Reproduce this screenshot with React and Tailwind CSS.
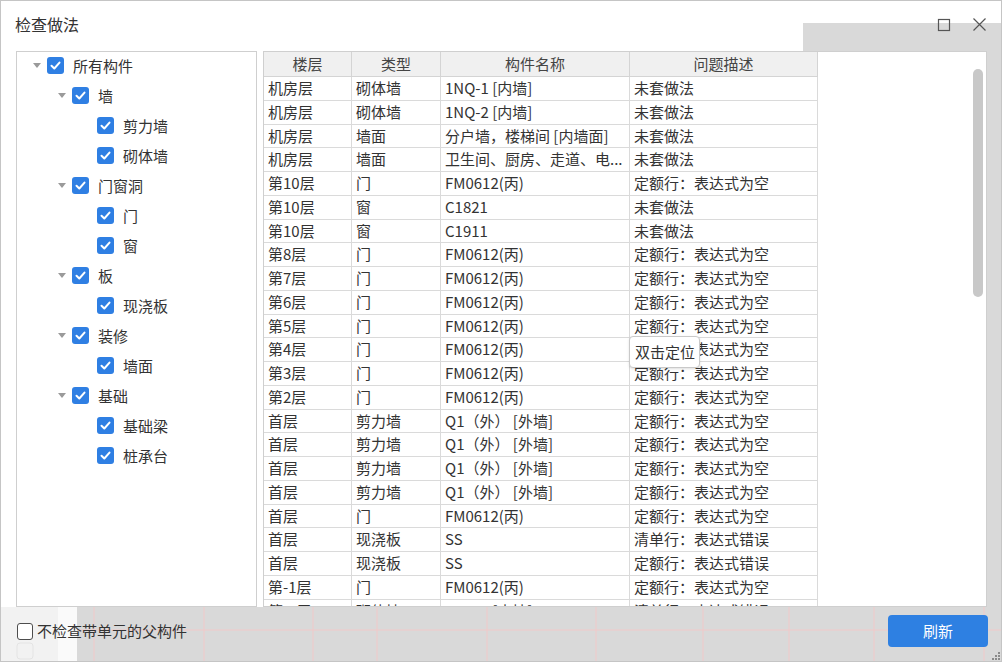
import React from 'react';

const tree = [
  { level: 0, label: '所有构件', arrow: true },
  { level: 1, label: '墙', arrow: true },
  { level: 2, label: '剪力墙' },
  { level: 2, label: '砌体墙' },
  { level: 1, label: '门窗洞', arrow: true },
  { level: 2, label: '门' },
  { level: 2, label: '窗' },
  { level: 1, label: '板', arrow: true },
  { level: 2, label: '现浇板' },
  { level: 1, label: '装修', arrow: true },
  { level: 2, label: '墙面' },
  { level: 1, label: '基础', arrow: true },
  { level: 2, label: '基础梁' },
  { level: 2, label: '桩承台' },
];

const empty = '定额行：表达式为空';
const rows = [
  ['机房层', '砌体墙', '1NQ-1 [内墙]', '未套做法'],
  ['机房层', '砌体墙', '1NQ-2 [内墙]', '未套做法'],
  ['机房层', '墙面', '分户墙，楼梯间 [内墙面]', '未套做法'],
  ['机房层', '墙面', '卫生间、厨房、走道、电...', '未套做法'],
  ['第10层', '门', 'FM0612(丙)', empty],
  ['第10层', '窗', 'C1821', '未套做法'],
  ['第10层', '窗', 'C1911', '未套做法'],
  ['第8层', '门', 'FM0612(丙)', empty],
  ['第7层', '门', 'FM0612(丙)', empty],
  ['第6层', '门', 'FM0612(丙)', empty],
  ['第5层', '门', 'FM0612(丙)', empty],
  ['第4层', '门', 'FM0612(丙)', empty],
  ['第3层', '门', 'FM0612(丙)', empty],
  ['第2层', '门', 'FM0612(丙)', empty],
  ['首层', '剪力墙', 'Q1（外） [外墙]', empty],
  ['首层', '剪力墙', 'Q1（外） [外墙]', empty],
  ['首层', '剪力墙', 'Q1（外） [外墙]', empty],
  ['首层', '剪力墙', 'Q1（外） [外墙]', empty],
  ['首层', '门', 'FM0612(丙)', empty],
  ['首层', '现浇板', 'SS', '清单行：表达式错误'],
  ['首层', '现浇板', 'SS', '定额行：表达式错误'],
  ['第-1层', '门', 'FM0612(丙)', empty],
  ['第-1层', '砌体墙', 'QTQ-1 [内墙]', '清单行：表达式错误'],
];

const Check = () => (
  <span className="w-[17px] h-[17px] rounded-[3px] bg-[#2f7fe3] flex items-center justify-center shrink-0">
    <svg width="13" height="13" viewBox="0 0 13 13" fill="none">
      <polyline points="2.5,6.8 5.3,9.5 10.5,3.6" stroke="#fff" strokeWidth="2" strokeLinecap="round" strokeLinejoin="round" />
    </svg>
  </span>
);

const Arrow = () => (
  <span className="w-0 h-0 border-l-[4px] border-r-[4px] border-t-[5px] border-l-transparent border-r-transparent border-t-[#9a9a9a]" />
);

const cols = ['w-[88px]', 'w-[89px]', 'w-[189px]', 'w-[188px]'];

export default function App() {
  return (
    <div className="w-[1002px] h-[662px] border border-[#c5c5c5] bg-[#d9d9d9] flex flex-col overflow-hidden font-['Noto_Sans_CJK_SC','Noto_Sans',sans-serif] text-[#333]">
      {/* title bar */}
      <div className="h-[50px] flex shrink-0">
        <div className="w-[802px] bg-white pl-[14px] pt-[12px] text-[16px] leading-[22px] text-[#333]">检查做法</div>
        <div className="flex-1 bg-[linear-gradient(to_bottom,#fff_22px,#d9d9d9_22px)] flex items-start justify-end pr-[14px] pt-[16px] gap-[21px]">
          <svg width="14" height="14" viewBox="0 0 14 14" className="mt-[1px]">
            <rect x="1.5" y="1.5" width="11" height="11" fill="none" stroke="#555" strokeWidth="1.2" />
          </svg>
          <svg width="15" height="15" viewBox="0 0 15 15">
            <path d="M1.5 1.5 L13.5 13.5 M13.5 1.5 L1.5 13.5" stroke="#555" strokeWidth="1.2" />
          </svg>
        </div>
      </div>

      {/* body */}
      <div className="h-[556px] flex shrink-0 pl-[15px] gap-[6px] bg-[linear-gradient(to_right,#fff_262px,#d9d9d9_262px)]">
        <div className="w-[241px] h-full border border-[#cfcfcf] bg-white text-[15px]">
          <div className="-mt-px">
            {tree.map((n, i) => (
              <div key={i} className="h-[29.95px] flex items-center" style={{ paddingLeft: 15 + n.level * 25 }}>
                <span className="w-[10px] mr-[5px] flex justify-center">{n.arrow && <Arrow />}</span>
                <Check />
                <span className="ml-[9px] leading-none">{n.label}</span>
              </div>
            ))}
          </div>
        </div>

        <div className="w-[724px] h-full border border-[#cfcfcf] bg-white relative overflow-hidden text-[15px]">
          <div className="flex h-[25px]">
            {['楼层', '类型', '构件名称', '问题描述'].map((h, i) => (
              <div key={h} className={`${cols[i]} shrink-0 bg-[#f0f0f0] border-r border-b border-[#d4d4d4] flex items-center justify-center text-[#444]`}>
                {h}
              </div>
            ))}
          </div>
          {rows.map((r, ri) => (
            <div key={ri} className="flex h-[23.76px]">
              {r.map((c, ci) => (
                <div key={ci} className={`${cols[ci]} shrink-0 border-r border-b border-[#dadada] pl-[4px] flex items-center whitespace-nowrap overflow-hidden`}>
                  {c}
                </div>
              ))}
            </div>
          ))}

          {/* scrollbar thumb */}
          <div className="absolute right-[3px] top-[17px] w-[10px] h-[228px] rounded-full bg-[#c8c8c8]" />

          {/* tooltip */}
          <div className="absolute left-[365px] top-[284px] w-[71px] h-[32px] bg-white border border-[#c9c9c9] rounded-[4px] shadow-sm flex items-center pl-[5px] text-[15px]">
            双击定位
          </div>
        </div>
      </div>

      {/* footer */}
      <div className="flex-1 relative bg-[linear-gradient(to_right,#f2f2f2_57px,#fafafa_57px,#fafafa_76px,#d9d9d9_76px)]">
        <svg className="absolute inset-0" width="1000" height="54">
          {[93, 203, 312, 376, 486, 595, 702, 788, 873, 983].map((x) => (
            <line key={x} x1={x} y1="0" x2={x} y2="54" stroke="#f1c9c9" strokeWidth="1" />
          ))}
          <line x1="76" y1="23" x2="1000" y2="23" stroke="#f1c9c9" strokeWidth="1" />
          <rect x="16" y="36" width="16" height="16" rx="3" fill="none" stroke="#e4e4e4" />
          <g fill="#8a8a8a">
            <rect x="997" y="45" width="2" height="2" />
            <rect x="994" y="48" width="2" height="2" />
            <rect x="997" y="48" width="2" height="2" />
            <rect x="991" y="51" width="2" height="2" />
            <rect x="994" y="51" width="2" height="2" />
            <rect x="997" y="51" width="2" height="2" />
          </g>
        </svg>
        <div className="relative h-[48px] flex items-center pl-[16px] pr-[13px]">
          <span className="w-[16px] h-[17px] border-[1.5px] border-[#4d4d4d] rounded-[3px] bg-white shrink-0" />
          <span className="ml-[4px] text-[15px] text-[#333]">不检查带单元的父构件</span>
          <button className="ml-auto w-[100px] h-[32px] rounded-[4px] bg-[#2e80e2] text-white text-[15px]">刷新</button>
        </div>
      </div>
    </div>
  );
}
